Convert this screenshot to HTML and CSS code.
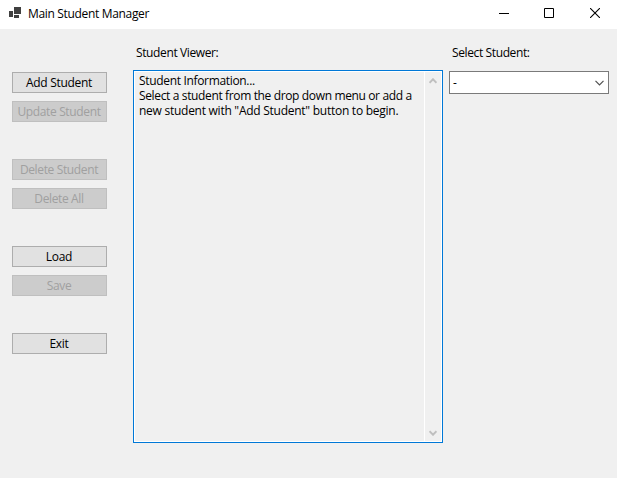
FILE: index.html
```html
<!DOCTYPE html>
<html lang="en">
<head>
<meta charset="utf-8">
<title>Main Student Manager</title>
<link rel="stylesheet" href="styles.css">
</head>
<body>
<header class="titlebar">
  <svg class="app-icon" width="13" height="12" viewBox="0 0 13 12" shape-rendering="crispEdges"><path fill="#404040" d="M5 0h7v7H5zM0 4h4v6H0zM5 8h5v3H5z"/></svg>
  <h1 class="title">Main Student Manager</h1>
  <nav class="controls">
    <svg width="10" height="10" viewBox="0 0 10 10"><path fill="#000" d="M0 5h10v1H0z"/></svg>
    <svg width="10" height="10" viewBox="0 0 10 10"><path fill="none" stroke="#000" d="M.5.5h9v9h-9z"/></svg>
    <svg class="close" width="10" height="10" viewBox="0 0 10 10"><path fill="none" stroke="#000" stroke-width="1.1" d="M0 0l10 10M10 0L0 10"/></svg>
  </nav>
</header>
<main class="content">
  <section class="actions">
    <div class="group">
      <button class="btn">Add Student</button>
      <button class="btn" disabled>Update Student</button>
    </div>
    <div class="group">
      <button class="btn" disabled>Delete Student</button>
      <button class="btn" disabled>Delete All</button>
    </div>
    <div class="group">
      <button class="btn">Load</button>
      <button class="btn" disabled>Save</button>
    </div>
    <div class="group">
      <button class="btn">Exit</button>
    </div>
  </section>
  <section class="viewer">
    <h2 class="label">Student Viewer:</h2>
    <div class="viewer-box">
      <div class="viewer-text">
        <p class="line">Student Information...</p>
        <p class="line middle">Select a student from the drop down menu or add a</p>
        <p class="line last">new student with "Add Student" button to begin.</p>
      </div>
      <div class="scrollbar">
        <svg width="8" height="6" viewBox="0 0 8 6"><path fill="none" stroke="#bfbfbf" stroke-width="2" d="M.5 4.8L4 1.3l3.5 3.5"/></svg>
        <svg width="8" height="6" viewBox="0 0 8 6"><path fill="none" stroke="#bfbfbf" stroke-width="2" d="M.5 1.2L4 4.7l3.5-3.5"/></svg>
      </div>
    </div>
  </section>
  <section class="picker">
    <h2 class="label">Select Student:</h2>
    <div class="select">
      <span>-</span>
      <svg width="9" height="6" viewBox="0 0 9 6"><path fill="none" stroke="#505050" stroke-width="1.2" d="M.5.8l4 4 4-4"/></svg>
    </div>
  </section>
</main>
</body>
</html>
```
FILE: styles.css
```css
* { box-sizing: border-box; }
body {
  margin: 0;
  width: 617px;
  height: 478px;
  overflow: hidden;
  background: #f0f0f0;
  color: #000;
  font: 12px/15px "Open Sans", "Noto Sans", sans-serif;
  letter-spacing: -0.33px;
}
h1, h2, p { margin: 0; font-size: inherit; font-weight: 400; white-space: nowrap; }
svg { display: block; flex: none; }
.titlebar {
  display: flex;
  height: 29px;
  background: #fff;
  padding-left: 9px;
}
.app-icon { margin-top: 7px; }
.title { margin: 6px 0 0 6px; }
.controls { display: flex; gap: 35px; margin: 8px 17px 0 auto; }
.close { margin-left: 1px; }
.content { display: flex; align-items: flex-start; }
.actions {
  display: flex;
  flex-direction: column;
  gap: 37px;
  width: 95px;
  margin: 43px 26px 0 12px;
}
.group { display: flex; flex-direction: column; gap: 8px; }
.btn {
  height: 21px;
  padding: 1px 1px 0 0;
  border: 1px solid #adadad;
  background: #e1e1e1;
  color: #000;
  font: inherit;
  letter-spacing: -0.3px;
  line-height: 18px;
}
.btn:disabled { border-color: #bfbfbf; background: #ccc; color: #a0a0a0; letter-spacing: -0.36px; }
.label { margin: 16px 0 10px 3px; height: 15px; letter-spacing: -0.38px; }
.viewer { width: 310px; }
.viewer-box {
  display: flex;
  height: 373px;
  border: 1px solid #0078d7;
  outline: 1px solid #fff;
  outline-offset: -2px;
}
.viewer-text { flex: 1; padding: 2px 0 0 5px; }
.middle { letter-spacing: -0.36px; }
.last { letter-spacing: -0.26px; }
.scrollbar {
  display: flex;
  flex-direction: column;
  justify-content: space-between;
  align-items: center;
  width: 18px;
  padding: 7px 1px 6px 0;
  border-left: 1px solid #fff;
}
.picker { width: 160px; margin-left: 6px; }
.select {
  display: flex;
  justify-content: space-between;
  align-items: center;
  height: 23px;
  margin-top: 11px;
  padding: 0 4px 0 3px;
  border: 1px solid #7a7a7a;
  background: #fff;
}
.select span { margin-top: -1px; }
```
